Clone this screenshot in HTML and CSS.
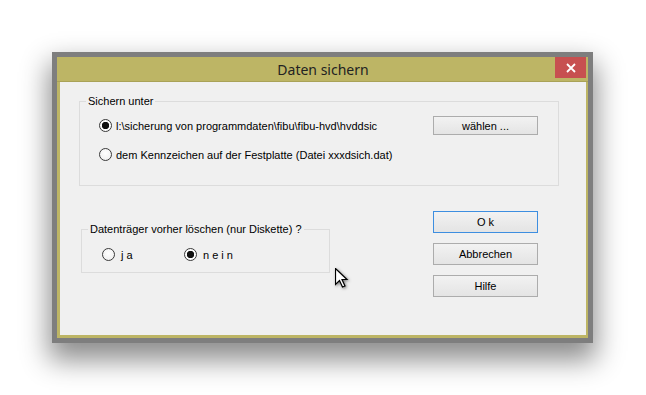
FILE: index.html
```html
<!DOCTYPE html>
<html lang="de">
<head>
<meta charset="utf-8">
<title>Daten sichern</title>
<link rel="stylesheet" href="styles.css">
</head>
<body>
<div class="window">
  <div class="titlebar">
    <span></span>
    <span class="title">Daten sichern</span>
    <button class="close" aria-label="Schließen">
      <svg width="10" height="10" viewBox="0 0 10 10"><path d="M1 1 L9 9 M9 1 L1 9" stroke="#fff" stroke-width="1.8" fill="none"/></svg>
    </button>
  </div>
  <div class="client">
    <div class="group group-save">
      <span class="legend">Sichern unter</span>
      <div class="row row-path">
        <label class="radio"><span class="dot checked"></span><span>l:\sicherung von programmdaten\fibu\fibu-hvd\hvddsic</span></label>
        <button class="btn btn-choose">wählen ...</button>
      </div>
      <div class="row row-flag">
        <label class="radio"><span class="dot"></span><span>dem Kennzeichen auf der Festplatte (Datei xxxdsich.dat)</span></label>
      </div>
    </div>
    <div class="lower">
      <div class="group group-erase">
        <span class="legend">Datenträger vorher löschen (nur Diskette) ?</span>
        <div class="row row-erase">
          <label class="radio radio-ja"><span class="dot"></span><span>j a</span></label>
          <label class="radio radio-nein"><span class="dot checked"></span><span>n e i n</span></label>
        </div>
      </div>
      <div class="buttons">
        <button class="btn btn-default">O k</button>
        <button class="btn">Abbrechen</button>
        <button class="btn">Hilfe</button>
      </div>
    </div>
    <svg class="cursor" width="14" height="21" viewBox="0 0 14 21">
      <path d="M0.5 0.5 L0.5 16.5 L4.5 12.5 L7.5 19 L10 18 L7 11.5 L12 11.5 Z" fill="#fff" stroke="#000" stroke-width="1.2" stroke-linejoin="miter"/>
    </svg>
  </div>
</div>
</body>
</html>
```
FILE: styles.css
```css
html, body {
  margin: 0;
  padding: 0;
}
body {
  background: #fff;
  width: 646px;
  height: 395px;
  overflow: hidden;
  font-family: "Liberation Sans", Arial, sans-serif;
  font-size: 11px;
  color: #000;
}
.window {
  margin: 52px 0 0 52px;
  width: 541px;
  height: 291px;
  box-sizing: border-box;
  border: 5px solid #7e7e7e;
  background: #bdb565;
  display: flex;
  flex-direction: column;
  padding: 0 2px 3px 3px;
  box-shadow: 0 14px 26px 3px rgba(0, 0, 0, 0.45);
}
.titlebar {
  height: 24px;
  border-bottom: 1px solid #a9a257;
  margin: 0 -2px 0 -3px;
  padding: 0 2px 0 3px;
  display: grid;
  grid-template-columns: 1fr auto 1fr;
  align-items: start;
}
.title {
  font-family: "Noto Sans", "Open Sans", sans-serif;
  font-size: 14px;
  line-height: 24px;
  color: #222;
  padding-top: 1px;
}
.close {
  justify-self: end;
  width: 31px;
  height: 21px;
  border: 0;
  padding: 0;
  margin: 0;
  background: #c75050;
  display: flex;
  align-items: center;
  justify-content: center;
}
.client {
  flex: 1;
  background: #f0f0f0;
  padding: 19px 0 0 19px;
  position: relative;
}
.group {
  position: relative;
  box-sizing: border-box;
  border: 1px solid #dcdcdc;
}
.legend {
  position: absolute;
  top: -8px;
  left: 6px;
  padding: 0 2px;
  background: #f0f0f0;
  line-height: 14px;
}
.group-save {
  width: 480px;
  height: 85px;
  padding: 14px 20px 0 19px;
}
.row {
  display: flex;
  align-items: center;
}
.row-path {
  height: 19px;
}
.row-flag {
  height: 19px;
  margin-top: 10px;
}
.radio {
  display: flex;
  align-items: center;
  gap: 4px;
  white-space: nowrap;
}
.dot {
  width: 13px;
  height: 13px;
  box-sizing: border-box;
  border-radius: 50%;
  border: 1px solid #3a3a3a;
  background: radial-gradient(circle at 50% 40%, #fff, #ececec);
  flex: none;
}
.dot.checked {
  background: radial-gradient(circle, #111 0 3.4px, #fdfdfd 4px);
}
.btn {
  box-sizing: border-box;
  width: 105px;
  height: 22px;
  padding: 0;
  margin: 0;
  border: 1px solid #acacac;
  background: linear-gradient(#f2f2f2, #e4e4e4);
  font-family: "Liberation Sans", Arial, sans-serif;
  font-size: 11px;
  color: #000;
}
.btn-choose {
  height: 19px;
  margin-left: auto;
}
.btn-default {
  border-color: #3d8ee0;
}
.lower {
  display: flex;
  align-items: flex-start;
  margin-top: 25px;
  padding-left: 2px;
}
.group-erase {
  width: 249px;
  height: 44px;
  margin-top: 18px;
  padding: 18px 0 0 20px;
}
.row-erase {
  height: 13px;
}
.radio-ja,
.radio-nein {
  gap: 6px;
}
.radio-ja {
  width: 82px;
}
.buttons {
  margin-left: 103px;
  display: flex;
  flex-direction: column;
  gap: 10px;
}
.cursor {
  position: absolute;
  left: 275px;
  top: 186px;
  filter: drop-shadow(1px 1px 1.5px rgba(0, 0, 0, 0.5));
}
```
